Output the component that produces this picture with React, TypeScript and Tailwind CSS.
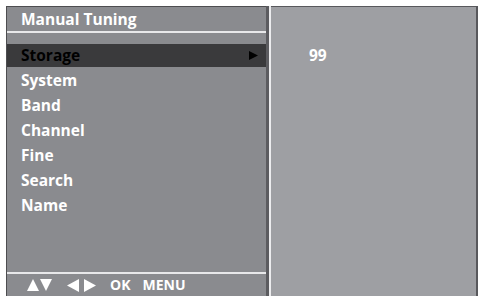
import React from "react";

const items = ["System", "Band", "Channel", "Fine", "Search", "Name"];

export default function App() {
  return (
    <div
      className="w-[481px] h-[296px] bg-white flex pl-[6px] pt-[6px] pr-[3px] overflow-hidden"
      style={{ fontFamily: '"Open Sans", "Noto Sans", sans-serif' }}
    >
      <div className="w-[260px] h-[290px] bg-[#8a8b8f] border-l border-t border-[#4d4d50] flex flex-col">
        <div className="h-[24px] pl-[14px] pt-[1px] text-white font-bold text-[15.5px] leading-[22px]">
          Manual Tuning
        </div>
        <div className="h-[2px] bg-[#e8e8ea]" />
        <div className="h-[11px]" />
        <div className="h-[23px] bg-[#3a3a3c] flex items-center justify-between pl-[14px] pr-[8px]">
          <span className="text-black font-bold text-[15.5px] leading-[23px]">Storage</span>
          <svg width="9" height="9" viewBox="0 0 9 9">
            <path d="M0 0 L9 4.5 L0 9 Z" fill="#000" />
          </svg>
        </div>
        <div className="flex flex-col pt-[1px]">
          {items.map((t) => (
            <div key={t} className="h-[25px] pl-[14px] text-white font-bold text-[15.5px] leading-[25px]">
              {t}
            </div>
          ))}
        </div>
        <div className="flex-1" />
        <div className="h-[2px] bg-[#e8e8ea]" />
        <div className="h-[22px] flex items-center pl-[20px] text-white font-bold text-[14px] leading-none">
          <span className="flex items-center gap-[1px]">
            <svg width="12" height="12" viewBox="0 0 12 12"><path d="M6 0 L12 12 L0 12 Z" fill="#fff" /></svg>
            <svg width="12" height="12" viewBox="0 0 12 12"><path d="M0 0 L12 0 L6 12 Z" fill="#fff" /></svg>
          </span>
          <span className="flex items-center gap-[5px] ml-[15px]">
            <svg width="12" height="13" viewBox="0 0 12 13"><path d="M12 0 L12 13 L0 6.5 Z" fill="#fff" /></svg>
            <svg width="12" height="13" viewBox="0 0 12 13"><path d="M0 0 L12 6.5 L0 13 Z" fill="#fff" /></svg>
          </span>
          <span className="ml-[14px]">OK</span>
          <span className="ml-[12px]">MENU</span>
        </div>
      </div>
      <div className="w-[3px] h-[290px] bg-[#5c5c60]" />
      <div className="w-[2px] h-[290px] bg-[#ececee]" />
      <div className="flex-1 h-[290px] bg-[#9e9fa3] border-t border-r-2 border-[#58585c] pl-[38px] pt-[36px]">
        <span className="text-white font-bold text-[15.5px] leading-[22px]">99</span>
      </div>
    </div>
  );
}
